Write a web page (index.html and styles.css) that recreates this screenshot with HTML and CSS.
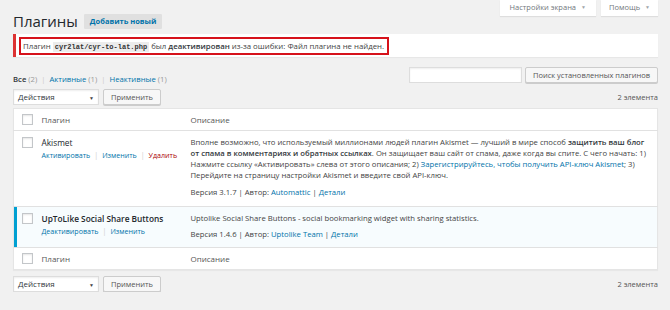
FILE: index.html
```html
<!DOCTYPE html>
<html lang="ru">
<head>
    <meta charset="UTF-8">
    <title>Плагины</title>
    <link rel="stylesheet" href="styles.css">
</head>
<body>
    <div class="wrap">
        <div class="top">
            <h1>Плагины <a class="add-new" href="#">Добавить новый</a></h1>
            <div class="screen-meta">
                <span class="tab">Настройки экрана <i class="arrow">▼</i></span>
                <span class="tab">Помощь <i class="arrow">▼</i></span>
            </div>
        </div>

        <div class="notice">
            <p class="marked">Плагин <code>cyr2lat/cyr-to-lat.php</code> был <b>деактивирован</b> из-за ошибки: Файл плагина не найден.</p>
        </div>

        <div class="filters">
            <ul class="subsubsub">
                <li><b>Все</b> <span class="count">(2)</span></li>
                <li class="sep">|</li>
                <li><a href="#">Активные</a> <span class="count">(1)</span></li>
                <li class="sep">|</li>
                <li><a href="#">Неактивные</a> <span class="count">(1)</span></li>
            </ul>
            <div class="search">
                <input type="text" class="search-input">
                <button class="button">Поиск установленных плагинов</button>
            </div>
        </div>

        <div class="tablenav">
            <div class="actions">
                <div class="select">Действия <i class="arrow">▼</i></div>
                <button class="button">Применить</button>
            </div>
            <span class="num">2 элемента</span>
        </div>

        <table class="plugins">
            <thead>
                <tr>
                    <td class="check"><span class="cb"></span></td>
                    <th class="col-name">Плагин</th>
                    <th>Описание</th>
                </tr>
            </thead>
            <tbody>
                <tr class="inactive">
                    <td class="check"><span class="cb"></span></td>
                    <td class="col-name">
                        <div class="plugin-title">Akismet</div>
                        <div class="row-actions">
                            <a href="#">Активировать</a><span class="sep">|</span><a href="#">Изменить</a><span class="sep">|</span><a href="#" class="delete">Удалить</a>
                        </div>
                    </td>
                    <td class="desc">
                        <p>Вполне возможно, что используемый миллионами людей плагин Akismet — лучший в мире способ <b>защитить ваш блог от спама в комментариях и обратных ссылках</b>. Он защищает ваш сайт от спама, даже когда вы спите. С чего начать: 1) Нажмите ссылку «Активировать» слева от этого описания; 2) <a href="#">Зарегистрируйтесь, чтобы получить API-ключ Akismet</a>; 3) Перейдите на страницу настройки Akismet и введите свой API-ключ.</p>
                        <p class="version">Версия 3.1.7 | Автор: <a href="#">Automattic</a> | <a href="#">Детали</a></p>
                    </td>
                </tr>
                <tr class="active">
                    <td class="check"><span class="cb"></span></td>
                    <td class="col-name">
                        <div class="plugin-title"><b>UpToLike Social Share Buttons</b></div>
                        <div class="row-actions">
                            <a href="#">Деактивировать</a><span class="sep">|</span><a href="#">Изменить</a>
                        </div>
                    </td>
                    <td class="desc">
                        <p>Uptolike Social Share Buttons - social bookmarking widget with sharing statistics.</p>
                        <p class="version">Версия 1.4.6 | Автор: <a href="#">Uptolike Team</a> | <a href="#">Детали</a></p>
                    </td>
                </tr>
            </tbody>
            <tfoot>
                <tr>
                    <td class="check"><span class="cb"></span></td>
                    <th class="col-name">Плагин</th>
                    <th>Описание</th>
                </tr>
            </tfoot>
        </table>

        <div class="tablenav bottom">
            <div class="actions">
                <div class="select">Действия <i class="arrow">▼</i></div>
                <button class="button">Применить</button>
            </div>
            <span class="num">2 элемента</span>
        </div>
    </div>
</body>
</html>
```

FILE: styles.css
```css
* {
    margin: 0;
    padding: 0;
    box-sizing: border-box;
}

body {
    background: #f1f1f1;
    color: #444;
    font-family: 'Open Sans', sans-serif;
    font-size: 7.7px;
    line-height: 11px;
}

a {
    color: #0073aa;
    text-decoration: none;
}

.wrap {
    padding: 0 12px 0 13px;
}

.top {
    display: flex;
    justify-content: space-between;
    align-items: flex-start;
    height: 30px;
}

h1 {
    font-size: 15px;
    font-weight: 400;
    line-height: 22px;
    color: #23282d;
    padding-top: 10px;
    display: flex;
    align-items: center;
}

.add-new {
    display: inline-block;
    margin-left: 6px;
    padding: 0 6px;
    height: 15px;
    line-height: 15px;
    background: #e0e0e0;
    font-size: 7.5px;
    font-weight: 700;
    color: #0073aa;
    border-radius: 1px;
}

.screen-meta {
    display: flex;
    gap: 5px;
}

.tab {
    display: block;
    height: 16px;
    line-height: 15px;
    padding: 0 10px;
    background: #fff;
    color: #72777c;
    font-size: 7.5px;
    box-shadow: 0 1px 1px rgba(0, 0, 0, 0.08);
}

.tab:last-child {
    padding: 0 8px;
}

.arrow {
    font-style: normal;
    font-size: 5px;
    color: #a0a5aa;
    margin-left: 3px;
    vertical-align: 1px;
}

.notice {
    margin-top: 4px;
    height: 23px;
    background: #fff;
    border-left: 3px solid #dc3232;
    box-shadow: 0 1px 1px rgba(0, 0, 0, 0.04);
    padding: 3px 0 0 3px;
}

.marked {
    display: inline-block;
    height: 18px;
    line-height: 14px;
    padding: 0 3px 0 2px;
    border: 2px solid #d6121b;
    color: #444;
    font-size: 7.8px;
}

.marked b {
    color: #32373c;
    font-weight: 600;
}

code {
    font-family: 'Liberation Mono', monospace;
    font-size: 7px;
    font-weight: 700;
    background: #ececec;
    padding: 1px 2px;
    color: #333;
}

.filters {
    margin-top: 10px;
    display: flex;
    justify-content: space-between;
    align-items: flex-end;
    height: 16px;
}

.subsubsub {
    list-style: none;
    display: flex;
    gap: 4px;
    color: #666;
    line-height: 11px;
    margin-bottom: -2px;
}

.subsubsub b {
    color: #32373c;
    font-weight: 600;
}

.count {
    color: #999;
}

.sep {
    color: #ccc;
}

.search {
    display: flex;
    gap: 3px;
}

.search-input {
    width: 113px;
    height: 16px;
    border: 1px solid #ddd;
    background: #fff;
    box-shadow: inset 0 1px 2px rgba(0, 0, 0, 0.07);
}

.button {
    height: 16px;
    padding: 0 7px;
    font-family: 'Open Sans', sans-serif;
    font-size: 7.5px;
    color: #555;
    background: #f7f7f7;
    border: 1px solid #ccc;
    border-radius: 2px;
    box-shadow: 0 1px 0 #ccc;
}

.tablenav {
    margin-top: 6px;
    display: flex;
    justify-content: space-between;
    align-items: center;
    height: 16px;
}

.tablenav.bottom {
    margin-top: 6px;
}

.actions {
    display: flex;
    gap: 4px;
}

.select {
    width: 86px;
    height: 16px;
    line-height: 14px;
    padding: 0 4px;
    background: #fff;
    border: 1px solid #ddd;
    box-shadow: inset 0 1px 2px rgba(0, 0, 0, 0.07);
    color: #32373c;
    font-size: 8px;
    display: flex;
    justify-content: space-between;
}

.select .arrow {
    color: #444;
    margin-top: 1px;
}

.num {
    color: #555;
    font-size: 7.5px;
}

.plugins {
    margin-top: 3px;
    width: 100%;
    border-collapse: collapse;
    background: #fff;
    border: 1px solid #e5e5e5;
    box-shadow: 0 1px 1px rgba(0, 0, 0, 0.04);
}

.plugins th {
    text-align: left;
    font-weight: 400;
    color: #555;
    font-size: 8px;
    height: 22px;
    padding: 0 4px;
}

.plugins thead tr {
    border-bottom: 1px solid #e1e1e1;
}

.plugins tfoot tr {
    border-top: 1px solid #e1e1e1;
}

.plugins td {
    vertical-align: top;
}

.check {
    width: 24px;
    padding-left: 8px;
}

thead .check,
tfoot .check {
    vertical-align: middle !important;
}

.cb {
    display: block;
    width: 11px;
    height: 11px;
    border: 1px solid #c3c6c9;
    background: #fff;
    box-shadow: inset 0 1px 2px rgba(0, 0, 0, 0.1);
}

tbody .check {
    padding-top: 6px;
}

.col-name {
    width: 149px;
    padding: 0 4px;
}

tbody .col-name {
    padding-top: 6px;
}

tbody tr {
    border-bottom: 1px solid #e1e1e1;
}

tbody tr:last-child {
    border-bottom: none;
}

.plugin-title {
    color: #23282d;
    font-size: 8.3px;
    line-height: 11px;
    margin-bottom: 2px;
}

.plugin-title b {
    font-weight: 600;
}

.row-actions {
    font-size: 7.1px;
    display: flex;
    gap: 4px;
}

.row-actions .delete {
    color: #a00;
}

.desc {
    padding: 6px 8px 8px 4px;
    color: #444;
}

.desc b {
    font-weight: 600;
    color: #32373c;
}

.desc p + p {
    margin-top: 6px;
}

.active {
    background: #f7fcfe;
}

.active .check {
    box-shadow: inset 3px 0 0 #00a0d2;
}

.active .check,
.active .col-name,
.active .desc {
    padding-top: 6px;
}

.active .desc {
    padding-bottom: 7px;
}

.active .desc p + p {
    margin-top: 5px;
}
```
